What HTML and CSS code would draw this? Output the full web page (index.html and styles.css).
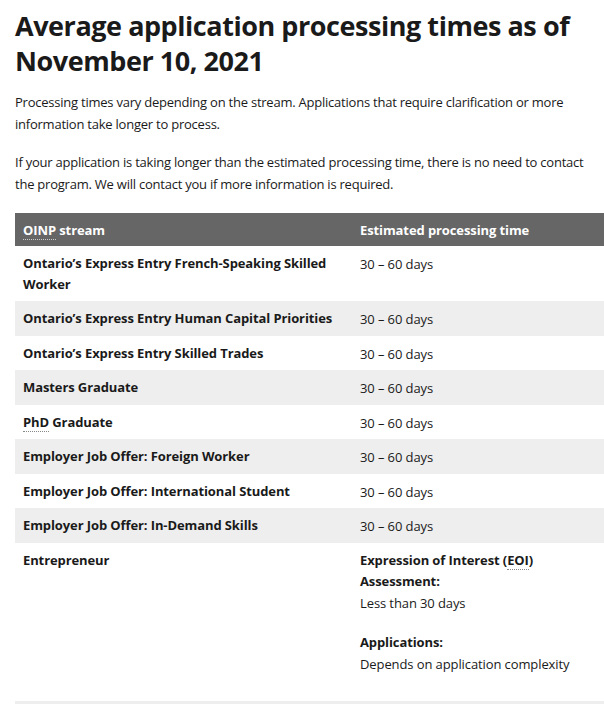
FILE: index.html
```html
<!DOCTYPE html>
<html lang="en">
<head>
<meta charset="utf-8">
<title>Processing times</title>
<link rel="stylesheet" href="styles.css">
</head>
<body>
<main class="page">
  <h1 class="title">Average application processing times as of November 10, 2021</h1>
  <p class="intro">Processing times vary depending on the stream. Applications that require clarification or more information take longer to process.</p>
  <p class="intro">If your application is taking longer than the estimated processing time, there is no need to contact the program. We will contact you if more information is required.</p>
  <table class="times">
    <thead>
      <tr><th class="c1"><abbr>OINP</abbr> stream</th><th class="c2">Estimated processing time</th></tr>
    </thead>
    <tbody>
      <tr><th>Ontario’s Express Entry French-Speaking Skilled Worker</th><td>30 – 60 days</td></tr>
      <tr class="alt"><th>Ontario’s Express Entry Human Capital Priorities</th><td>30 – 60 days</td></tr>
      <tr><th>Ontario’s Express Entry Skilled Trades</th><td>30 – 60 days</td></tr>
      <tr class="alt"><th>Masters Graduate</th><td>30 – 60 days</td></tr>
      <tr><th><abbr>PhD</abbr> Graduate</th><td>30 – 60 days</td></tr>
      <tr class="alt"><th>Employer Job Offer: Foreign Worker</th><td>30 – 60 days</td></tr>
      <tr><th>Employer Job Offer: International Student</th><td>30 – 60 days</td></tr>
      <tr class="alt"><th>Employer Job Offer: In-Demand Skills</th><td>30 – 60 days</td></tr>
      <tr class="last"><th>Entrepreneur</th><td>
        <div class="block"><strong>Expression of Interest (<abbr>EOI</abbr>) Assessment:</strong><br>Less than 30 days</div>
        <div class="block"><strong>Applications:</strong><br>Depends on application complexity</div>
      </td></tr>
    </tbody>
  </table>
</main>
</body>
</html>
```
FILE: styles.css
```css
html, body { margin: 0; padding: 0; background: #fff; }
body { font-family: "Open Sans", "Liberation Sans", sans-serif; color: #1a1a1a; }
.page { padding: 8px 0 0 15px; }
.title {
  font-family: "Open Sans", sans-serif;
  font-weight: 700;
  font-size: 27px;
  line-height: 35px;
  margin: 0 0 13px;
  letter-spacing: -0.45px;
}
.intro { font-size: 13px; line-height: 22px; margin: 0 0 16px; letter-spacing: -0.23px; }
.intro + .intro { margin-bottom: 18px; }
.times { width: 589px; border-collapse: collapse; font-size: 13px; letter-spacing: -0.1px; margin: 0; border-bottom: 3px solid #eeeeee; }
.times thead th { background: #666666; color: #fff; text-align: left; font-weight: 700; padding: 7px 8px 6px; line-height: 20px; }
.times .c1 { width: 321px; }
.times tbody th { text-align: left; font-weight: 700; vertical-align: top; padding: 7px 8px 7px; line-height: 20.5px; }
.times tbody td { vertical-align: top; padding: 8px 8px 6px; line-height: 20.5px; }
.times tr.alt { background: #eeeeee; }
.times tr.last td { padding-top: 7px; padding-bottom: 26px; }
.block { line-height: 21.5px; }
.block + .block { margin-top: 18px; }
abbr { text-decoration: none; border-bottom: 1px dotted #888; }
thead abbr { border-bottom-color: #ccc; }
```
